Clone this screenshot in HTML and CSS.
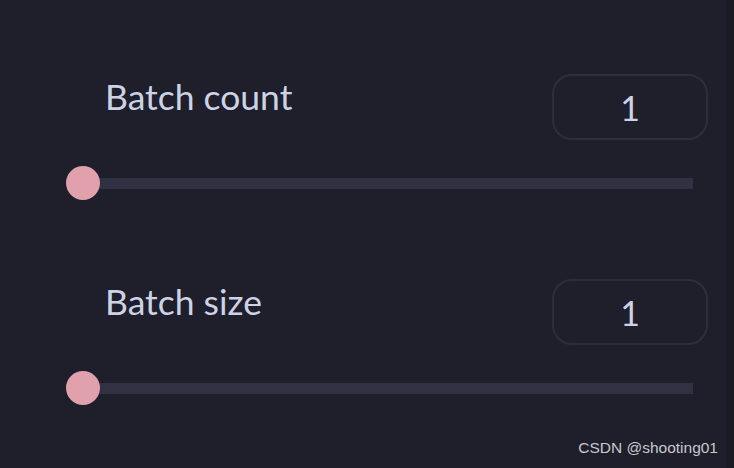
FILE: index.html
```html
<!DOCTYPE html>
<html>
<head>
<meta charset="utf-8">
<link rel="stylesheet" href="styles.css">
</head>
<body>
<div class="page">
  <div class="panel">
    <div class="group">
      <div class="header">
        <span class="label">Batch count</span>
        <div class="number">1</div>
      </div>
      <div class="slider">
        <div class="track"></div>
        <div class="thumb"></div>
      </div>
    </div>
    <div class="group">
      <div class="header">
        <span class="label">Batch size</span>
        <div class="number">1</div>
      </div>
      <div class="slider">
        <div class="track"></div>
        <div class="thumb"></div>
      </div>
    </div>
  </div>
  <div class="edge"></div>
  <div class="watermark">CSDN @shooting01</div>
</div>
</body>
</html>
```

FILE: styles.css
```css
html, body {
  margin: 0;
  padding: 0;
  background: #1f1f2b;
}
.page {
  position: relative;
  width: 734px;
  height: 468px;
  display: flex;
  overflow: hidden;
  font-family: Lato, "Open Sans", sans-serif;
}
.panel {
  flex: 1;
  padding: 74px 18px 0 66px;
  display: flex;
  flex-direction: column;
  gap: 79px;
}
.edge {
  width: 8px;
  background: #1b1b25;
}
.group {
  display: flex;
  flex-direction: column;
}
.header {
  display: flex;
  justify-content: space-between;
  align-items: flex-start;
  height: 66px;
}
.label {
  padding-left: 39px;
  padding-top: 5px;
  font-size: 35.5px;
  line-height: 35px;
  color: #cdd3e6;
}
.number {
  box-sizing: border-box;
  width: 156px;
  height: 66px;
  border: 2px solid #2d2e3c;
  border-radius: 20px;
  display: flex;
  align-items: center;
  justify-content: center;
  font-size: 34px;
  color: #cdd3e6;
}
.slider {
  position: relative;
  margin-top: 26px;
  width: 627px;
  height: 34px;
  display: flex;
  align-items: center;
}
.track {
  flex: 1;
  height: 11px;
  margin-left: 17px;
  background: #313241;
}
.thumb {
  position: absolute;
  left: 0;
  top: 0;
  width: 34px;
  height: 34px;
  border-radius: 50%;
  background: #e0a0ac;
}
.watermark {
  position: absolute;
  right: 16px;
  bottom: 11px;
  font-family: "Liberation Sans", Arial, sans-serif;
  font-size: 15.5px;
  color: #c8c8cc;
}
```
